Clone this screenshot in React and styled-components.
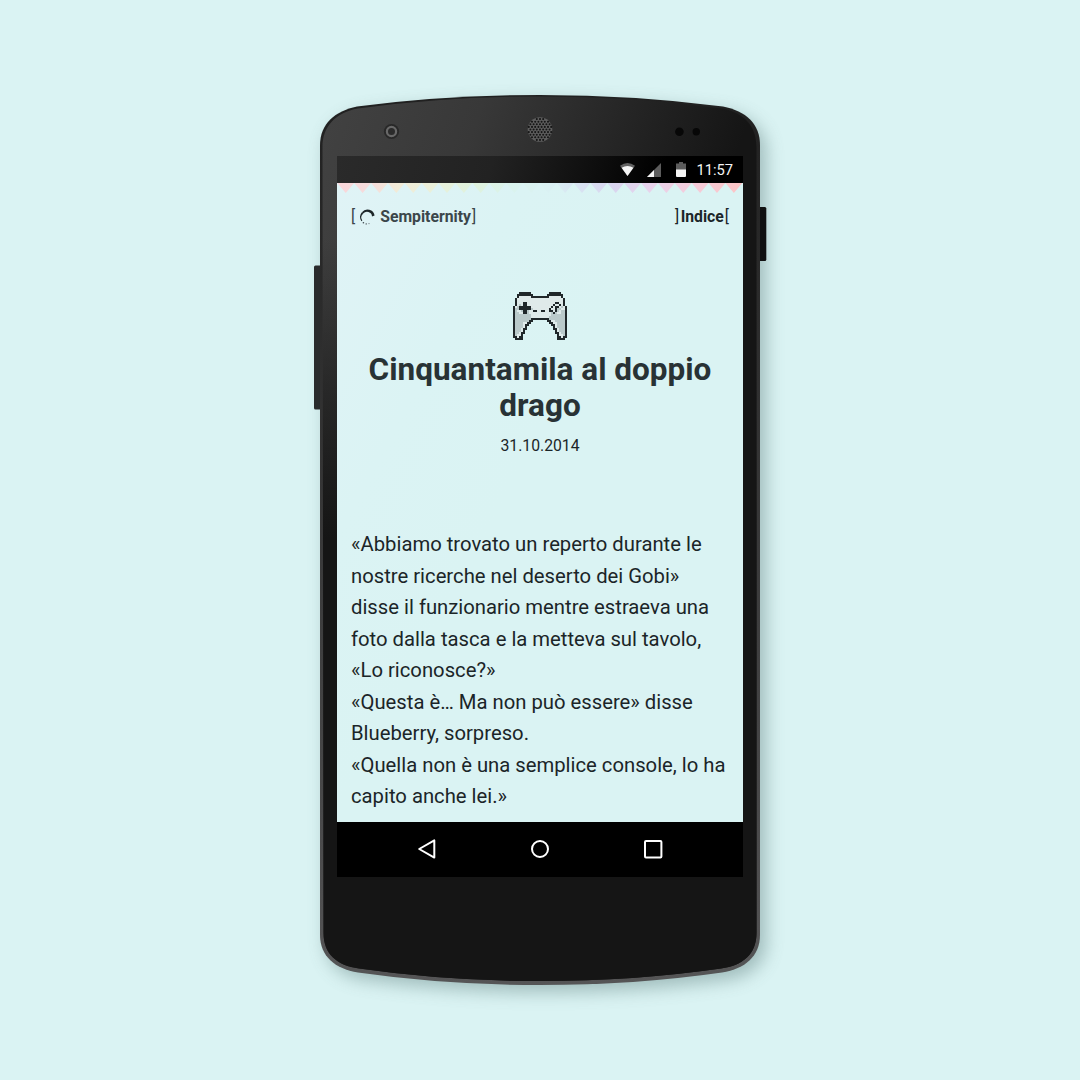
import React from "react";
import styled, { createGlobalStyle } from "styled-components";

const GlobalStyle = createGlobalStyle`
  * { box-sizing: border-box; }
  body {
    margin: 0;
    background: #daf3f3;
    font-family: Roboto, "Liberation Sans", sans-serif;
    color: #1b2528;
  }
`;

const Stage = styled.main`
  position: relative;
  width: 1080px;
  height: 1080px;
  overflow: hidden;
  background: #daf3f3;
  padding: 156px 337px 0;
`;

const DeviceArt = styled.svg`
  position: absolute;
  inset: 0;
  display: block;
`;

const Screen = styled.section`
  position: relative;
  display: flex;
  flex-direction: column;
  width: 406px;
  height: 720.5px;
  background: #000;
`;

const StatusBar = styled.div`
  display: flex;
  align-items: center;
  justify-content: flex-end;
  height: 27px;
  padding-right: 10px;
  background: linear-gradient(105deg, #2a2a2a 0%, #222 38%, #0f0f0f 62%, #000 80%);
`;

const StatusIcon = styled.svg`
  display: block;
  margin-right: ${(p) => p.$gap}px;
`;

const Clock = styled.span`
  font-size: 14.7px;
  line-height: 27px;
  color: #f4f4f4;
  padding-top: 2px;
`;

const Page = styled.div`
  display: flex;
  flex-direction: column;
  height: 639.4px;
  background: linear-gradient(118deg, #e0f3f6 0%, #dbf3f4 25%, #daf3f3 45%);
`;

const Bunting = styled.svg`
  display: block;
  flex: none;
`;

const Header = styled.header`
  display: flex;
  justify-content: space-between;
  align-items: center;
  height: 24px;
  margin-top: 12px;
  padding: 0 14px 0 14px;
  font-size: 15.75px;
  line-height: 24px;
`;

const NavLink = styled.a`
  display: flex;
  align-items: center;
  font-weight: 700;
  color: ${(p) => p.$color};
`;

const Bracket = styled.span`
  font-weight: 400;
  padding: 0 ${(p) => p.$after || 0}px 0 ${(p) => p.$before || 0}px;
`;

const Spinner = styled.svg`
  display: block;
  margin: 0 5px 0 4px;
`;

const Hero = styled.div`
  display: flex;
  flex-direction: column;
  align-items: center;
  margin-top: 63px;
`;

const Title = styled.h1`
  margin: 12px 0 0;
  font-size: 31.5px;
  line-height: 36px;
  font-weight: 700;
  text-align: center;
  white-space: nowrap;
  color: #283235;
`;

const PostDate = styled.time`
  margin-top: 12px;
  font-size: 15.75px;
  line-height: 20px;
`;

const Story = styled.div`
  margin-top: 73px;
  padding-left: 14px;
  font-size: 20.25px;
  line-height: 31.5px;
  white-space: nowrap;
`;

const Line = styled.p`
  margin: 0;
`;

const NavBar = styled.nav`
  display: grid;
  grid-template-columns: 113px 113px 113px;
  justify-content: center;
  align-items: center;
  justify-items: center;
  height: 54px;
  background: #000;
`;

const SPRITE = [
  "...######.........######...",
  "..########.......########..",
  "..#wwwwww#########wwwwww#..",
  ".#wwwwwwwwwwwwwwwwwwwwwww#.",
  ".#wwwwwwwwwwwwwwwwwwwwwww#.",
  ".#www##wwwwwwwwwwwwww##ww#.",
  ".#wgw##wwwwwwwwwwwww#ww#w#.",
  "#wg######wwwwwwwwww#w##wgw#",
  "#gg######gwwwwwwww#ww#ggww#",
  "#gwwg##gww##ww##ww##w#gwgg#",
  "#ggww##gwwwwwwwwwwwg#gwwgg#",
  "#ggggggggwwwwwwwwwwggggggg#",
  "#ggggggggwwwwwwwwwgggggggg#",
  "#gggggggg#########gggggggg#",
  "#ggggggg##.......##wwggggg#",
  "#ggggww##.........##wwgggg#",
  "#ggggw##...........##wgggg#",
  "#ggggw#.............#wgggg#",
  "#gggw##.............##wggg#",
  "#gggw#...............#wggg#",
  "#ggw##...............##wgg#",
  "#gww#.................#wwg#",
  "##w##.................##w##",
  ".####.................####.",
];

const SPRITE_COLORS = { "#": "#20272a", w: "#dfeaea", g: "#bac9ca" };

function Gamepad() {
  return (
    <svg width="54" height="48" viewBox="0 0 27 24" shapeRendering="crispEdges">
      {SPRITE.flatMap((row, y) =>
        [...row].map((c, x) =>
          c === "." ? null : (
            <rect key={`${x}-${y}`} x={x} y={y} width="1" height="1" fill={SPRITE_COLORS[c]} />
          )
        )
      )}
    </svg>
  );
}

const BODY =
  "M320 145 C320 124 335 111 357 106.5 Q445 95 540 95 Q635 95 723 106.5 C746 111 760 124 760 145 V935 C760 956 745 969 722 972.5 Q635 985 540 985 Q445 985 358 972.5 C335 969 320 956 320 935 Z";
const FACE =
  "M322.5 147 C322.5 126 336 112.5 358 108.5 Q446 96.5 540 96.5 Q634 96.5 722 108.5 C744 112.5 756.5 126 756.5 147 V933 C756.5 954 743 965.5 721 968.5 Q634 981 540 981 Q446 981 359 968.5 C337 965.5 323.5 954 323.5 933 Z";

const speakerHoles = [];
for (let r = -4; r <= 4; r++) {
  for (let c = -4; c <= 4; c++) {
    const x = c * 3.2 + (r % 2 ? 1.6 : 0);
    const y = r * 2.6;
    if (Math.hypot(x, y) < 11.5) speakerHoles.push([540 + x, 129.5 + y]);
  }
}

function Device() {
  return (
    <DeviceArt width="1080" height="1080" viewBox="0 0 1080 1080" aria-hidden="true">
      <defs>
        <linearGradient id="face" gradientUnits="userSpaceOnUse" x1="330" y1="120" x2="700" y2="255">
          <stop offset="0" stopColor="#414141" />
          <stop offset="0.35" stopColor="#383838" />
          <stop offset="0.65" stopColor="#282828" />
          <stop offset="1" stopColor="#151515" />
        </linearGradient>
        <linearGradient id="lower" x1="0" y1="0" x2="0" y2="1">
          <stop offset="0.16" stopColor="#151515" stopOpacity="0" />
          <stop offset="0.5" stopColor="#151515" />
        </linearGradient>
        <linearGradient id="rim" x1="0" y1="0" x2="0" y2="1">
          <stop offset="0" stopColor="#202020" />
          <stop offset="0.25" stopColor="#2c2c2c" />
          <stop offset="0.7" stopColor="#434344" />
          <stop offset="1" stopColor="#555556" />
        </linearGradient>
        <filter id="shadow" x="-20%" y="-10%" width="140%" height="120%">
          <feGaussianBlur stdDeviation="9" />
        </filter>
      </defs>
      <path d={BODY} transform="translate(6 7)" fill="#466967" opacity="0.4" filter="url(#shadow)" />
      <rect x="314" y="265.5" width="10" height="144" rx="1.5" fill="#292b2c" />
      <rect x="756" y="207" width="10.3" height="54" rx="1.5" fill="#101011" />
      <path d={BODY} fill="url(#rim)" />
      <path d={FACE} fill="url(#face)" />
      <path d={FACE} fill="url(#lower)" />
      <circle cx="391.5" cy="131.5" r="7.6" fill="#282828" />
      <circle cx="391.5" cy="131.5" r="4.6" fill="#2b2b2b" stroke="#686868" strokeWidth="2.2" />
      <circle cx="540" cy="129.5" r="12.3" fill="#5e5e5e" />
      {speakerHoles.map(([x, y]) => (
        <circle key={`${x}-${y}`} cx={x} cy={y} r="1.05" fill="#161616" />
      ))}
      <circle cx="679.4" cy="131.7" r="4.3" fill="#070707" />
      <circle cx="696.3" cy="131.7" r="3.7" fill="#070707" />
    </DeviceArt>
  );
}

function Pennants() {
  const step = 405 / 24;
  return (
    <Bunting width="406" height="10" viewBox="-0.3 0 406 10">
      <defs>
        <linearGradient id="rainbow" gradientUnits="userSpaceOnUse" x1="0" y1="0" x2="405" y2="0">
          <stop offset="0" stopColor="#fad6da" />
          <stop offset="0.08" stopColor="#f5dcdc" />
          <stop offset="0.15" stopColor="#f2ebd7" />
          <stop offset="0.24" stopColor="#e9f0da" />
          <stop offset="0.34" stopColor="#dff2dd" />
          <stop offset="0.43" stopColor="#daf3ed" />
          <stop offset="0.52" stopColor="#daf1f3" />
          <stop offset="0.6" stopColor="#d8e2f2" />
          <stop offset="0.68" stopColor="#d9d5ef" />
          <stop offset="0.77" stopColor="#e7d3ec" />
          <stop offset="0.86" stopColor="#f3cddd" />
          <stop offset="1" stopColor="#fdc4c5" />
        </linearGradient>
      </defs>
      <path
        fill="url(#rainbow)"
        d={Array.from({ length: 24 }, (_, i) => `M${i * step} 0H${(i + 1) * step}L${(i + 0.5) * step} 10Z`).join("")}
      />
    </Bunting>
  );
}

const STORY = [
  "«Abbiamo trovato un reperto durante le",
  "nostre ricerche nel deserto dei Gobi»",
  "disse il funzionario mentre estraeva una",
  "foto dalla tasca e la metteva sul tavolo,",
  "«Lo riconosce?»",
  "«Questa è… Ma non può essere» disse",
  "Blueberry, sorpreso.",
  "«Quella non è una semplice console, lo ha",
  "capito anche lei.»",
];

export default function App() {
  return (
    <Stage>
      <GlobalStyle />
      <Device />
      <Screen>
        <StatusBar>
          <StatusIcon $gap={12} width="15" height="13" viewBox="0 0 15 13">
            <path d="M0 2.7Q7.5 -2.5 15 2.7L7.5 13Z" fill="#626262" />
            <path d="M1.6 4.8Q7.5 1.4 13.4 4.8L7.5 13Z" fill="#f5f5f5" />
          </StatusIcon>
          <StatusIcon $gap={15} width="14" height="14" viewBox="0 0 14 14">
            <path d="M14 0V14H0Z" fill="#5c5c5c" />
            <path d="M7 7V14H0Z" fill="#f5f5f5" />
          </StatusIcon>
          <StatusIcon $gap={10} width="10" height="15" viewBox="0 0 10 15">
            <path d="M3 0H7V1.5H10V8H0V1.5H3Z" fill="#5c5c5c" />
            <path d="M0 7.5H10V14Q10 15 9 15H1Q0 15 0 14Z" fill="#f5f5f5" />
          </StatusIcon>
          <Clock>11:57</Clock>
        </StatusBar>
        <Page>
          <Pennants />
          <Header>
            <NavLink $color="#3b464a">
              <Bracket>[</Bracket>
              <Spinner width="16" height="16" viewBox="0 0 16 16">
                <path
                  d="M2.4 12.2A7 7 0 0 1 2.9 3.2L4.2 4.4A5.6 5.6 0 0 0 3.3 11.6Z"
                  fill="#1d2629"
                />
                <path d="M2.9 3.2A7.2 7.2 0 0 1 15.6 6.6L13 7.4A5 5 0 0 0 4.2 4.6Z" fill="#1d2629" />
                <circle cx="4.4" cy="13.8" r="0.8" fill="#3b464a" />
                <circle cx="7.2" cy="14.9" r="0.7" fill="#3b464a" />
                <circle cx="10" cy="14.6" r="0.6" fill="#6d787b" />
              </Spinner>
              Sempiternity
              <Bracket $before={1}>]</Bracket>
            </NavLink>
            <NavLink $color="#1b2528">
              <Bracket $after={1.5}>]</Bracket>
              Indice
              <Bracket $before={1}>[</Bracket>
            </NavLink>
          </Header>
          <Hero>
            <Gamepad />
            <Title>
              Cinquantamila al doppio
              <br />
              drago
            </Title>
            <PostDate>31.10.2014</PostDate>
          </Hero>
          <Story>
            {STORY.map((text) => (
              <Line key={text}>{text}</Line>
            ))}
          </Story>
        </Page>
        <NavBar>
          <svg width="20" height="22" viewBox="0 0 20 22">
            <path d="M2.2 11L17.3 2.4V19.6Z" fill="none" stroke="#fff" strokeWidth="2" strokeLinejoin="round" />
          </svg>
          <svg width="20" height="20" viewBox="0 0 20 20">
            <circle cx="10" cy="10" r="8" fill="none" stroke="#fff" strokeWidth="2" />
          </svg>
          <svg width="20" height="20" viewBox="0 0 20 20">
            <rect x="2" y="2" width="16.4" height="16.4" rx="1" fill="none" stroke="#fff" strokeWidth="2" />
          </svg>
        </NavBar>
      </Screen>
    </Stage>
  );
}
